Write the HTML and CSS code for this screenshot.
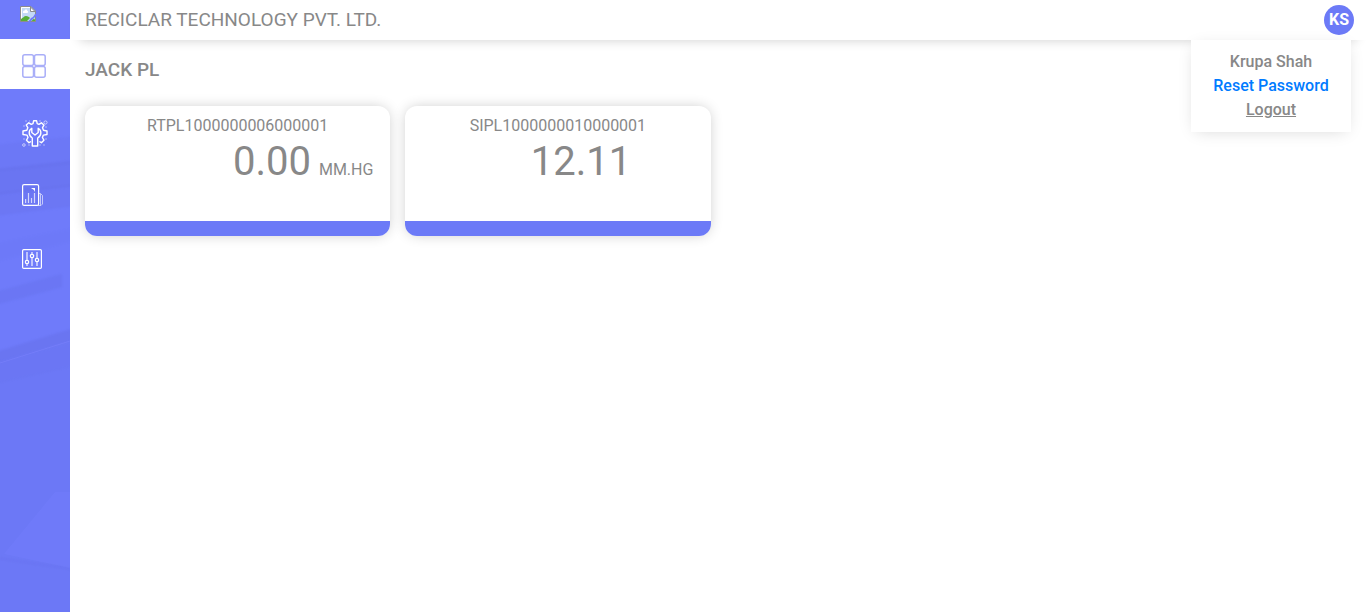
FILE: index.html
```html
<!DOCTYPE html>
<html lang="en">
<head>
<meta charset="utf-8">
<meta name="viewport" content="width=device-width, initial-scale=1">
<title>Reciclar Technology</title>
<link rel="stylesheet" href="styles.css">
</head>
<body>
<div class="app">
  <nav class="sidebar" aria-label="Main">
    <svg class="texture" viewBox="0 0 70 612" preserveAspectRatio="none" aria-hidden="true">
      <g class="bands" fill="#5b63d8">
        <path opacity=".1" d="M-5 145L75 136V164L-5 172Z"/>
        <path opacity=".24" d="M-5 169L75 160V186L-5 195Z"/>
        <path opacity=".16" d="M-5 193L75 184V206L-5 216Z"/>
        <path opacity=".06" d="M-5 244L75 228V240L-5 262Z"/>
        <path opacity=".18" d="M-5 292L62 274V287L-5 305Z"/>
        <path opacity=".25" d="M-5 352L75 328V340L-5 363Z"/>
        <path opacity=".18" d="M-5 363L75 341V366L-5 384Z"/>
        <path opacity=".1" d="M-5 384L75 366V620H-5Z"/>
        <path opacity=".12" d="M0 557L75 568V571L0 560Z"/>
      </g>
      <path fill="none" stroke="#8288ff" opacity=".4" d="M0 363L70 341"/>
      <path fill="#7781ff" opacity=".3" d="M4 554L55 492H70V568Z"/>
    </svg>
    <a class="brand" href="#" aria-label="Home">
      <svg width="16" height="16" viewBox="0 0 16 16">
        <path fill="#c3d9f7" stroke="#8c8c8c" d="M.5.500H11L15.500 5V15.500H.5Z"/>
        <path fill="none" stroke="#fff" d="M1.500 14.500V1.500H10"/>
        <path fill="#fff" d="M3 6c0-2 2-1 2-2 1-1 3 0 2 1 2 0 1 2 0 2H3Z"/>
        <path fill="#56ae37" d="M1 15v-2c2-1 3-3 5-3s3 1 4 2l-3 3Z"/>
        <path fill="#fff" stroke="#8c8c8c" d="M10.500 1V5.500H15Z"/>
        <path fill="#6f7bfa" d="M16 8v2l-6 6H8l3-4 2-1 2-3Z"/>
        <path fill="#56ae37" d="M11 15.500l3-3 1 1v2Z"/>
        <path fill="none" stroke="#8c8c8c" d="M.5 15.500H7M11 15.500h4.500V13"/>
      </svg>
    </a>
    <a class="item active" href="#" aria-label="Dashboard">
      <svg width="24" height="24" viewBox="0 0 24 24" fill="none" stroke="#a9aef8" stroke-width="1.500">
        <rect x=".8" y=".8" width="10.700" height="10.700" rx="2"/><rect x="12.500" y=".8" width="10.700" height="10.700" rx="2"/>
        <rect x=".8" y="12.500" width="10.700" height="10.700" rx="2"/><rect x="12.500" y="12.500" width="10.700" height="10.700" rx="2"/>
      </svg>
    </a>
    <a class="item settings" href="#" aria-label="Settings">
      <svg width="26" height="27" viewBox="0 0 26 27" fill="none" stroke="#fff" stroke-width="1.400" stroke-linejoin="round">
        <path d="M9 21.500l-2 1.200-2.500-2.500 1.500-2.700-1-2.400L1 14.500v-3.500l3.800-.8 1-2.500L4.200 5 6.800 2.800 9.300 4.400 11 3.700 11.600.8h3L15.200 3.700l1.700.7 2.500-1.600 2.600 2.400-1.500 2.500 1 2.500 3.500.8v3.500l-3.600.6-1 2.400 1.500 2.700-2.500 2.500-2-1.200"/>
        <path d="M10.300 26v-8C6 15.500 6.500 10 9.800 8.300v4.200l3.200 2.500 3.200-2.500V8.300c3.300 1.700 4 7.200-.5 9.700v8Z"/>
        <circle cx="23.500" cy="2.500" r="1.600" opacity=".6" stroke-width="1"/><circle cx="1.900" cy="25" r="1.300" opacity=".6" stroke-width="1"/>
        <path opacity=".45" stroke-width="1" stroke-dasharray="2 2" d="M3 1h5M17 1h4M1 6h2M23 7h2M1 19h2M23 19h2M6 25h3M17 25h7"/>
      </svg>
    </a>
    <a class="item" href="#" aria-label="Reports">
      <svg width="21" height="22" viewBox="0 0 21 22" fill="none" stroke="#fff">
        <rect x=".6" y=".6" width="16" height="20.800" rx="1.500" stroke-width="1.200"/>
        <path opacity=".6" d="M17 9.500h1.500l2 2V20l-1.500 1.500h-3M18.500 10v11"/>
        <path opacity=".7" stroke-width="1.200" d="M3.600 19v-4M6.500 19V9M9.500 19v-5M12.500 19V9"/>
        <path fill="#fff" stroke="none" d="M9 4h4v4l-1-2Z"/>
      </svg>
    </a>
    <a class="item" href="#" aria-label="Controls">
      <svg width="20" height="20" viewBox="0 0 20 20" fill="none" stroke="#fff">
        <rect x=".6" y=".6" width="18.800" height="18.800" rx="1.200" stroke-width="1.200"/>
        <path opacity=".55" stroke-width="2" d="M5 3v8M5 15v2M10 3v2M10 9v8M15 3v6M15 13v4"/>
        <g stroke-width="1.200"><circle cx="5" cy="13" r="1.700"/><circle cx="10" cy="7" r="1.700"/><circle cx="15" cy="11" r="1.700"/></g>
      </svg>
    </a>
  </nav>
  <div class="page">
    <header class="topbar">
      <div class="company">RECICLAR TECHNOLOGY PVT. LTD.</div>
      <div class="account">
        <button class="avatar" type="button" aria-expanded="true">KS</button>
        <div class="menu">
          <span>Krupa Shah</span>
          <a class="reset" href="#">Reset Password</a>
          <a class="logout" href="#">Logout</a>
        </div>
      </div>
    </header>
    <main>
      <h1>JACK PL</h1>
      <div class="cards">
        <section class="card">
          <h2>RTPL1000000006000001</h2>
          <div class="reading"><span class="value">0.00</span><span class="unit">MM.HG</span></div>
        </section>
        <section class="card">
          <h2>SIPL1000000010000001</h2>
          <div class="reading"><span class="value">12.11</span><span class="unit"></span></div>
        </section>
      </div>
    </main>
  </div>
</div>
</body>
</html>
```
FILE: styles.css
```css
* { box-sizing: border-box; }
body {
  margin: 0;
  background: #fff;
  color: #888;
  font-family: Roboto, "Liberation Sans", sans-serif;
  font-size: 16px;
  line-height: 24px;
}
.app { display: flex; min-height: 100vh; }
.sidebar {
  position: relative;
  flex: none;
  display: flex;
  flex-direction: column;
  width: 70px;
  background: #6f7bfa;
}
.texture { position: absolute; inset: 0; width: 100%; height: 100%; }
.bands { filter: blur(1px); }
.sidebar a { position: relative; display: flex; }
.sidebar a svg { display: block; }
.brand { height: 39px; padding: 6px 20px; }
.item { height: 50px; align-items: center; padding-left: 22px; margin-bottom: 14px; }
.item.active { background: #fff; margin-bottom: 18px; padding-top: 4px; }
.item.settings { padding-top: 2px; margin-bottom: 13px; }
.page { flex: 1; min-width: 0; }
.topbar {
  position: relative;
  display: flex;
  align-items: center;
  justify-content: space-between;
  height: 40px;
  padding: 0 12px 0 15px;
  box-shadow: 0 10px 12px -10px rgba(0, 0, 0, .2);
}
.company { font-size: 19px; }
.avatar {
  display: block;
  width: 30px;
  height: 30px;
  padding: 0;
  border: 0;
  border-radius: 50%;
  background: #6c7af7;
  color: #fff;
  font: 700 16px/30px Roboto, "Liberation Sans", sans-serif;
}
.menu {
  position: absolute;
  top: 100%;
  right: 15px;
  display: flex;
  flex-direction: column;
  align-items: center;
  width: 160px;
  padding: 10px;
  background: #fff;
  font-weight: 500;
  box-shadow: 0 3px 16px -5px rgba(0, 0, 0, .18);
}
.reset { color: #007bff; text-decoration: none; }
.logout { color: #888; }
main { padding: 18px 15px; }
h1 { margin: 0 0 24px; font-size: 19px; font-weight: 500; line-height: 24px; }
.cards {
  display: grid;
  grid-template-columns: repeat(4, minmax(0, 1fr));
  gap: 15px;
}
.card {
  min-height: 130px;
  padding-top: 8px;
  border-bottom: 15px solid #6c7af7;
  border-radius: 12px;
  box-shadow: 0 0 14px -2px rgba(0, 0, 0, .24);
}
h2 { margin: 0; font-size: 16px; font-weight: 400; text-align: center; }
.reading {
  display: grid;
  grid-template-columns: 19fr 6fr;
  column-gap: 8px;
  align-items: baseline;
}
.value { font-size: 40px; line-height: 48px; text-align: right; }
```
